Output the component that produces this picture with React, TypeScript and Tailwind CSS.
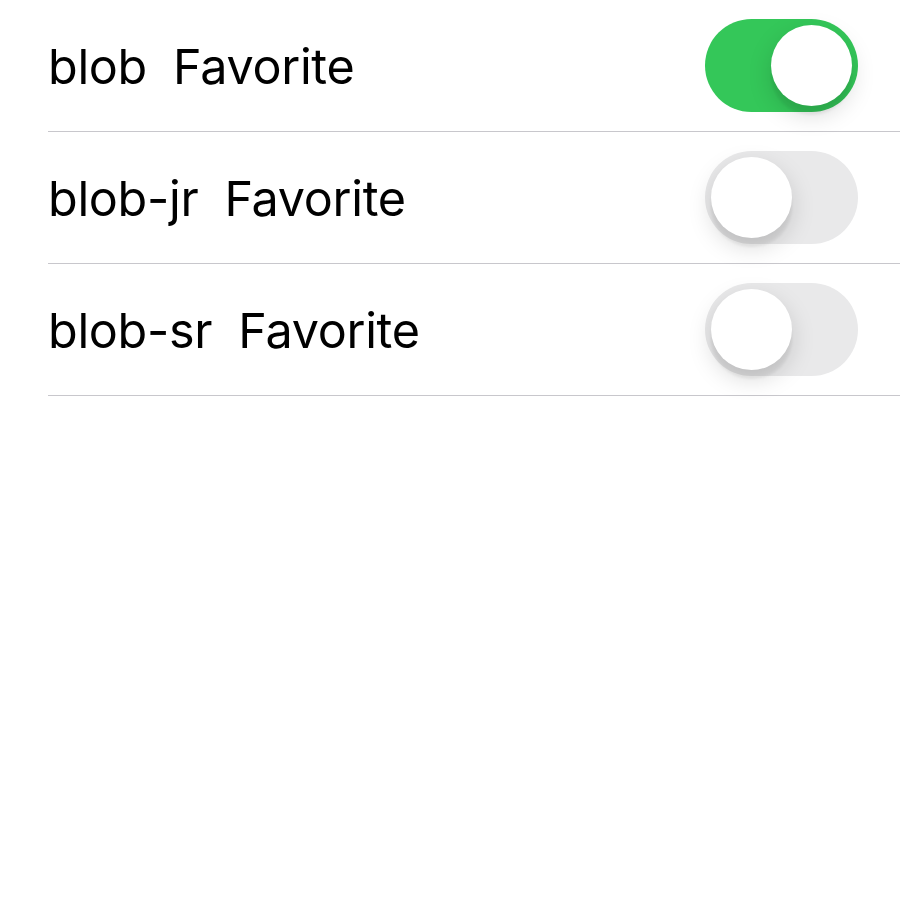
import React from "react";

const rows = [
  { name: "blob", on: true },
  { name: "blob-jr", on: false },
  { name: "blob-sr", on: false },
];

function Toggle({ on }: { on: boolean }) {
  return (
    <div
      className={
        "relative w-[153px] h-[93px] rounded-full shrink-0 " +
        (on ? "bg-[#34c759]" : "bg-[#e9e9ea]")
      }
    >
      <div
        className={
          "absolute top-[6px] w-[81px] h-[81px] rounded-full bg-white shadow-[0_9px_24px_rgba(0,0,0,0.15),0_9px_3px_rgba(0,0,0,0.06)] " +
          (on ? "right-[6px]" : "left-[6px]")
        }
      />
    </div>
  );
}

export default function App() {
  return (
    <div className="w-[900px] h-[900px] bg-white" style={{ fontFamily: "Inter, 'Noto Sans', sans-serif" }}>
      <div className="pl-[48px]">
        {rows.map((r) => (
          <div key={r.name} className="flex items-center justify-between h-[132px] pr-[42px] border-b border-[#c8c7cc]">
            <span className="flex gap-[26px] pt-[4px] text-[48.5px] text-black tracking-[-0.3px] whitespace-pre">
              <span>{r.name}</span>
              <span>Favorite</span>
            </span>
            <Toggle on={r.on} />
          </div>
        ))}
      </div>
    </div>
  );
}
